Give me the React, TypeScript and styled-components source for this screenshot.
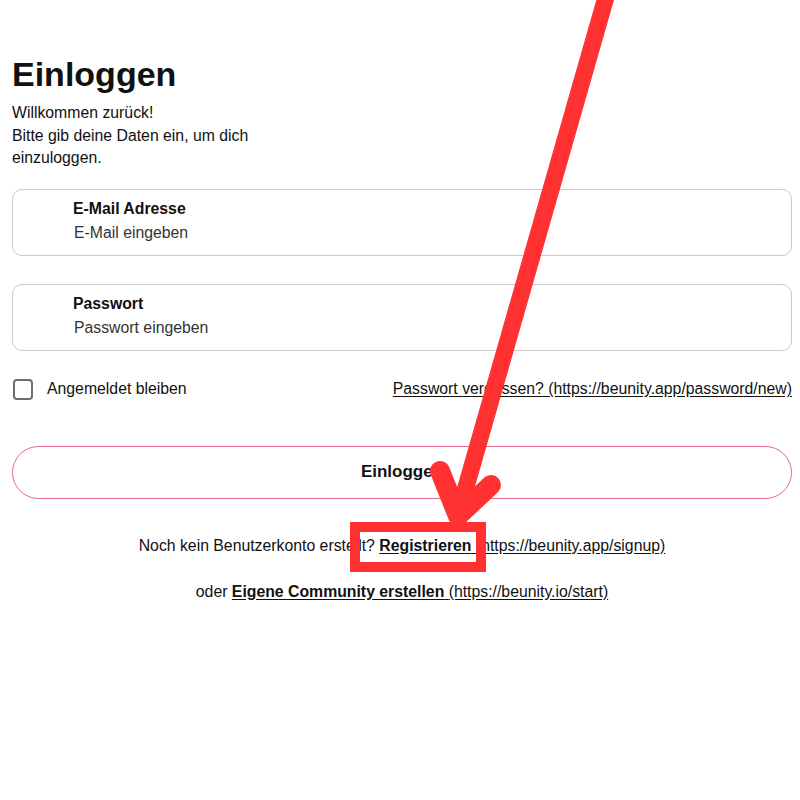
import styled, { createGlobalStyle } from "styled-components";

const GlobalStyle = createGlobalStyle`
  html, body {
    margin: 0;
    padding: 0;
    background: #fff;
  }
  body {
    font-family: "Liberation Sans", Arial, sans-serif;
    color: #111;
  }
`;

const Page = styled.div`
  position: relative;
  width: 800px;
  height: 800px;
  box-sizing: border-box;
  padding: 52px 8px 0 12px;
  overflow: hidden;
`;

const Title = styled.h1`
  margin: 0;
  font-size: 34px;
  line-height: 44px;
  font-weight: 700;
`;

const Intro = styled.p`
  margin: 6px 0 0;
  max-width: 260px;
  font-size: 15.8px;
  line-height: 22.5px;
`;

const Field = styled.label<{ $top: number }>`
  display: flex;
  flex-direction: column;
  gap: 5px;
  height: 67px;
  box-sizing: border-box;
  margin-top: ${({ $top }) => $top}px;
  padding: 9px 0 0 60px;
  border: 1.5px solid #c9c9c9;
  border-radius: 10px;
`;

const FieldLabel = styled.span`
  font-size: 15.8px;
  font-weight: 700;
  line-height: 19px;
`;

const FieldInput = styled.input`
  border: none;
  outline: none;
  padding: 0;
  margin-left: 1px;
  font-family: inherit;
  font-size: 15.8px;
  line-height: 19px;
  color: #333;
  background: transparent;

  &::placeholder {
    color: #333;
  }
`;

const OptionsRow = styled.div`
  display: flex;
  align-items: center;
  justify-content: space-between;
  margin-top: 28px;
  font-size: 15.8px;
`;

const Remember = styled.label`
  display: flex;
  align-items: center;
  gap: 14px;
`;

const Box = styled.span`
  display: inline-block;
  width: 16px;
  height: 17px;
  margin-left: 1px;
  border: 2px solid #6c6c7a;
  border-radius: 4px;
`;

const TextLink = styled.a<{ $bold?: boolean }>`
  color: #111;
  text-decoration: underline;
  text-underline-offset: 2px;
  font-weight: ${({ $bold }) => ($bold ? 700 : 400)};
`;

const SubmitButton = styled.button`
  display: block;
  width: 100%;
  height: 53px;
  margin-top: 46px;
  border: 1.5px solid #e46a8c;
  border-radius: 27px;
  background: #fff;
  font-family: inherit;
  font-size: 17px;
  font-weight: 700;
  color: #111;
`;

const Footnote = styled.p<{ $top: number }>`
  margin: ${({ $top }) => $top}px 0 0;
  text-align: center;
  font-size: 15.8px;
  line-height: 20px;
`;

const Annotation = styled.svg`
  position: absolute;
  left: 0;
  top: 0;
  pointer-events: none;
`;

export default function App() {
  return (
    <Page>
      <GlobalStyle />
      <Title>Einloggen</Title>
      <Intro>
        Willkommen zurück!
        <br />
        Bitte gib deine Daten ein, um dich einzuloggen.
      </Intro>

      <Field $top={19}>
        <FieldLabel>E-Mail Adresse</FieldLabel>
        <FieldInput type="email" placeholder="E-Mail eingeben" />
      </Field>
      <Field $top={28}>
        <FieldLabel>Passwort</FieldLabel>
        <FieldInput type="password" placeholder="Passwort eingeben" />
      </Field>

      <OptionsRow>
        <Remember>
          <Box />
          Angemeldet bleiben
        </Remember>
        <TextLink href="#">
          Passwort vergessen? (https://beunity.app/password/new)
        </TextLink>
      </OptionsRow>

      <SubmitButton>Einloggen</SubmitButton>

      <Footnote $top={37}>
        Noch kein Benutzerkonto erstellt?{" "}
        <TextLink href="#" $bold>
          Registrieren{" "}
        </TextLink>
        <TextLink href="#">(https://beunity.app/signup)</TextLink>
      </Footnote>
      <Footnote $top={26}>
        oder{" "}
        <TextLink href="#" $bold>
          Eigene Community erstellen{" "}
        </TextLink>
        <TextLink href="#">(https://beunity.io/start)</TextLink>
      </Footnote>

      {/* red markup drawn over the screenshot */}
      <Annotation width="800" height="800" viewBox="0 0 800 800">
        <g fill="none" stroke="#ff3131" strokeLinecap="round" strokeLinejoin="round">
          <path d="M608 -10 L460 508" strokeWidth="17" />
          <path d="M440 471 L458 516 L491 485" strokeWidth="20" />
          <rect x="355" y="527" width="126" height="40" strokeWidth="10" strokeLinecap="butt" strokeLinejoin="miter" />
        </g>
      </Annotation>
    </Page>
  );
}
